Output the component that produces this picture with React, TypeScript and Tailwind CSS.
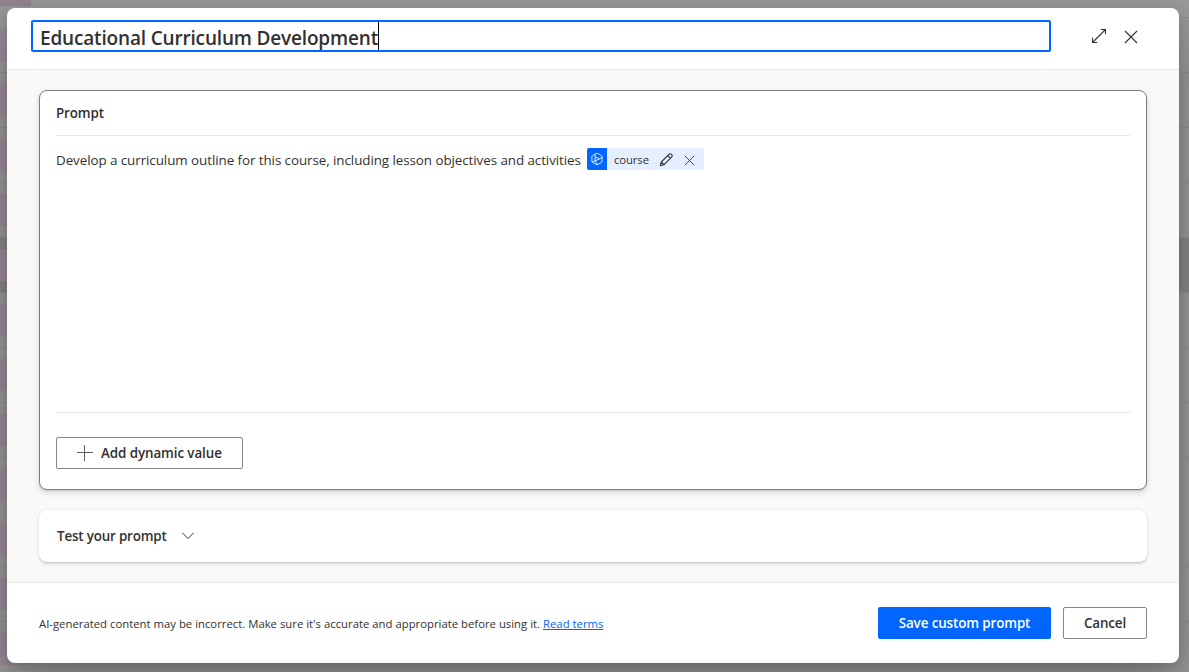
import React from "react";

type Row = { height: number; selected?: boolean; line?: boolean };

const rows: Row[] = [
  { height: 55 },
  { height: 55 },
  { height: 55 },
  { height: 55 },
  { height: 55, selected: true },
  { height: 55 },
  { height: 55 },
  { height: 55 },
  { height: 55 },
  { height: 54, line: false },
  { height: 55 },
  { height: 55 },
];

function BackgroundList() {
  return (
    <div className="flex h-full w-full flex-col">
      <div className="h-[17px] shrink-0">
        <div className="h-[6px] w-[31px] bg-[#928391]" />
      </div>
      {rows.map((row, i) => (
        <div
          key={i}
          style={{ height: row.height }}
          className={`shrink-0 pt-[11px] ${row.line === false ? "" : "border-t border-[#8f8f8f]"} ${row.selected ? "bg-[#8a8886]" : ""}`}
        >
          <div className="h-[32px] w-[31px] bg-[#9b8c9a]" />
        </div>
      ))}
    </div>
  );
}

function CloseIcon({ className }: { className: string }) {
  return (
    <svg viewBox="0 0 14 14" className={className} fill="none" stroke="#323130" strokeWidth="1.1">
      <path d="M1 1L13 13M13 1L1 13" />
    </svg>
  );
}

function ExpandIcon() {
  return (
    <svg viewBox="0 0 16 16" className="size-4" fill="none" stroke="#323130" strokeWidth="1.1">
      <path d="M1.5 14.5L14.5 1.5M9.8 1.5H14.5V6.2M1.5 9.8V14.5H6.2" />
    </svg>
  );
}

function PencilIcon() {
  return (
    <svg viewBox="0 0 14 14" className="size-[14px]" fill="none" stroke="#323130" strokeWidth="1.1" strokeLinejoin="round">
      <path d="M1.3 12.7L2.3 9L9.9 1.4A1.8 1.8 0 0 1 12.6 4.1L5 11.7L1.3 12.7ZM8.8 2.5L11.5 5.2M2.3 9L5 11.7" />
    </svg>
  );
}

function DynamicIcon() {
  return (
    <svg viewBox="0 0 14 14" className="size-[14px]" fill="none" stroke="#fff" strokeWidth="0.85" strokeLinejoin="round">
      <path d="M6.2 1.5Q7 1.1 7.8 1.5L11.4 3.5Q12.1 4 12.1 4.8V9.2Q12.1 10 11.4 10.5L7.8 12.5Q7 12.9 6.2 12.5L2.6 10.5Q1.9 10 1.9 9.2V4.8Q1.9 4 2.6 3.5Z" />
      <path d="M5.1 2.4V8.9L9.6 6.8L5.1 4.9M9.6 6.8L12 5.2M5.1 8.9L2.2 9.9M5.1 8.9L7.4 12.4" />
    </svg>
  );
}

export default function App() {
  return (
    <div className="relative h-screen w-full overflow-hidden bg-[#999] font-['Open_Sans','Noto_Sans',sans-serif] text-[#323130]">
      <BackgroundList />
      <div
        role="dialog"
        className="absolute top-[8px] left-[7px] flex h-[655px] w-[1172px] flex-col overflow-hidden rounded-[8px] bg-white shadow-[0_25px_58px_rgba(0,0,0,0.22),0_5px_14px_rgba(0,0,0,0.18)]"
      >
        <header className="flex h-[62px] shrink-0 items-start border-b border-[#e6e6e6] pt-3 pl-6">
          <div className="flex h-8 w-[1020px] items-center rounded-[2px] border-2 border-[#0066ff] pl-[7px]">
            <span className="pt-1 text-[19px] leading-6 font-semibold tracking-[-0.17px] whitespace-nowrap">Educational Curriculum Development</span>
            <span className="h-[28px] w-px bg-black" />
          </div>
          <button className="mt-2 ml-10 flex size-4 items-center justify-center"><ExpandIcon /></button>
          <button className="mt-[10px] ml-[17px] flex size-[14px] items-center justify-center"><CloseIcon className="size-[14px]" /></button>
        </header>

        <main className="flex h-[512px] shrink-0 flex-col bg-[#faf9f8] px-8 pt-5">
          <section className="flex h-[400px] shrink-0 flex-col rounded-[8px] border border-[#807e7c] bg-white px-4 shadow-[0_3px_7px_rgba(0,0,0,0.13),0_1px_2px_rgba(0,0,0,0.11)]">
            <h2 className="flex h-[45px] shrink-0 items-center border-b border-[#e8e8e8] pb-px text-[13.4px] leading-5 font-semibold tracking-[-0.12px]">
              <span>Prompt</span>
            </h2>
            <div className="flex h-[277px] shrink-0 items-start border-b border-[#e8e8e8] pt-3">
              <span className="mt-[2px] w-[525px] text-[13.4px] leading-5 tracking-[-0.07px] whitespace-nowrap">
                Develop a curriculum outline for this course, including lesson objectives and activities
              </span>
              <span className="ml-[6px] flex h-[22px] w-[117px] items-center overflow-hidden rounded-[2px] bg-[#e5efff]">
                <span className="flex h-full w-5 items-center justify-center bg-[#0066ff]"><DynamicIcon /></span>
                <span className="ml-[7px] w-[45px] pt-[2px] text-[11.3px] leading-4 tracking-[-0.1px]">course</span>
                <span className="flex items-center pt-[2px]">
                  <PencilIcon />
                  <CloseIcon className="ml-[11px] size-[11px]" />
                </span>
              </span>
            </div>
            <button className="mt-6 flex h-8 w-[187px] items-center rounded-[2px] border border-[#8a8886] pl-5 text-[13.4px] leading-5 font-semibold tracking-[-0.09px]">
              <svg viewBox="0 0 16 16" className="mr-2 size-4" stroke="#605e5c" strokeWidth="1" shapeRendering="crispEdges">
                <path d="M0 7.5H16M7.5 0V16" />
              </svg>
              <span className="pb-px whitespace-nowrap">Add dynamic value</span>
            </button>
          </section>

          <section className="mt-5 flex h-[52px] shrink-0 items-center rounded-[8px] bg-white pl-[18px] shadow-[0_1.6px_3.6px_rgba(0,0,0,0.13),0_0.3px_0.9px_rgba(0,0,0,0.11)]">
            <span className="w-[125px] pb-px text-[13.4px] leading-5 font-semibold tracking-[-0.18px] whitespace-nowrap">Test your prompt</span>
            <svg viewBox="0 0 12 8" className="h-2 w-3" fill="none" stroke="#323130" strokeWidth="1">
              <path d="M0.4 0.9L6 6.5L11.6 0.9" />
            </svg>
          </section>
        </main>

        <footer className="flex flex-1 items-center border-t border-[#e6e6e6] px-8">
          <p className="pt-[2px] text-[11.33px] leading-4 whitespace-nowrap">
            AI-generated content may be incorrect. Make sure it's accurate and appropriate before using it.{" "}
            <a className="text-[#0066ff] underline">Read terms</a>
          </p>
          <button className="ml-auto flex h-8 w-[173px] items-center justify-center rounded-[2px] bg-[#0066ff] pb-px text-[13.4px] leading-5 font-semibold tracking-[-0.11px] text-white">
            <span>Save custom prompt</span>
          </button>
          <button className="ml-3 flex h-8 w-[84px] items-center justify-center rounded-[2px] border border-[#8a8886] bg-white pb-px text-[13.4px] leading-5 font-semibold tracking-[-0.15px]">
            <span>Cancel</span>
          </button>
        </footer>
      </div>
    </div>
  );
}
